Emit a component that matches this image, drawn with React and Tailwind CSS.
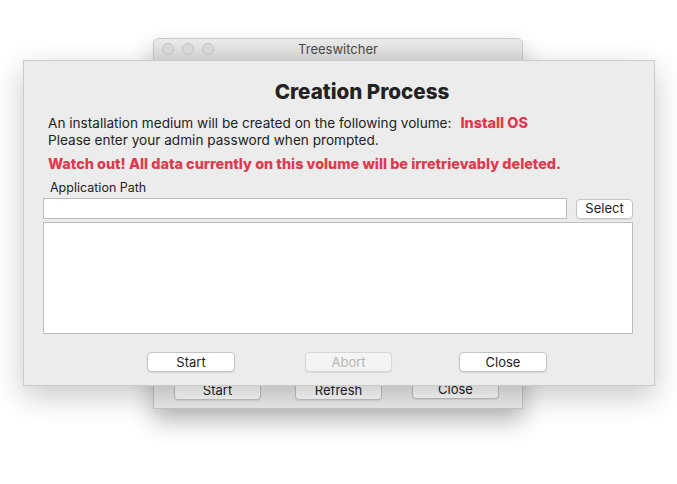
import React from "react";

const font = { fontFamily: "Inter, 'Noto Sans', sans-serif" };

const MacButton = ({ children, disabled, className = "" }) => (
  <button
    disabled={disabled}
    className={`h-[20px] rounded-[4px] border text-[13px] leading-none shadow-[0_1px_1px_rgba(0,0,0,0.08)] ${
      disabled
        ? "border-[#d6d6d6] bg-[#f4f4f4] text-[#b5b5b5]"
        : "border-[#c4c4c4] bg-white text-[#222]"
    } ${className}`}
  >
    {children}
  </button>
);

const App = () => {
  return (
    <div className="relative w-[677px] h-[484px] bg-white overflow-hidden" style={font}>
      {/* Background window */}
      <div className="absolute left-[153px] top-[38px] w-[370px] h-[371px] flex flex-col rounded-t-[6px] bg-[#ececec] border border-[#c8c8c8] shadow-[0_12px_24px_rgba(0,0,0,0.28)]">
        <div className="relative h-[22px] flex items-center justify-center rounded-t-[6px] bg-gradient-to-b from-[#ebebeb] to-[#d9d9d9] border-b border-[#b8b8b8]">
          <div className="absolute left-[8px] top-[4px] flex gap-[8px]">
            <span className="w-[12px] h-[12px] rounded-full border border-[#c4c4c4] bg-[#dcdcdc]" />
            <span className="w-[12px] h-[12px] rounded-full border border-[#c4c4c4] bg-[#dcdcdc]" />
            <span className="w-[12px] h-[12px] rounded-full border border-[#c4c4c4] bg-[#dcdcdc]" />
          </div>
          <span className="text-[13px] text-[#4a4a4a]">Treeswitcher</span>
        </div>
        <div className="flex-1" />
        <div className="flex items-start pl-[20px] pb-[6px] h-[30px]">
          <MacButton className="w-[87px] mt-[2px]">Start</MacButton>
          <MacButton className="w-[87px] ml-[34px] mt-[2px]">Refresh</MacButton>
          <MacButton className="w-[87px] ml-[30px] mt-[1px]">Close</MacButton>
        </div>
      </div>

      {/* Sheet */}
      <div className="absolute left-[23px] top-[60px] w-[632px] h-[326px] flex flex-col bg-[#ececec] border border-[#cbcbcb] shadow-[0_10px_28px_rgba(0,0,0,0.22)] pl-[19px] pr-[21px]">
        <h1 className="mt-[19px] text-center text-[20.6px] font-extrabold leading-[24px] text-[#222] pl-[48px]">
          Creation Process
        </h1>
        <div className="mt-[10px] pl-[5px] text-[13.6px] leading-[17px] text-[#222]">
          <p>
            An installation medium will be created on the following volume:
            <span className="ml-[9px] text-[14.4px] font-extrabold text-[#e0394f]">Install OS</span>
          </p>
          <p>Please enter your admin password when prompted.</p>
        </div>
        <p className="mt-[6px] pl-[5px] text-[14.4px] leading-[17px] font-extrabold text-[#e0394f]">
          Watch out! All data currently on this volume will be irretrievably deleted.
        </p>
        <label className="mt-[8px] pl-[7px] text-[12.5px] leading-[15px] text-[#222]">
          Application Path
        </label>
        <div className="mt-[3px] flex items-center gap-[9px]">
          <input className="flex-1 h-[21px] bg-white border border-[#bdbdbd] outline-none" />
          <MacButton className="w-[57px]">Select</MacButton>
        </div>
        <textarea className="mt-[3px] h-[112px] bg-white border border-[#bdbdbd] resize-none outline-none" />
        <div className="mt-[18px] flex pl-[104px]">
          <MacButton className="w-[88px]">Start</MacButton>
          <MacButton disabled className="w-[87px] ml-[70px]">Abort</MacButton>
          <MacButton className="w-[88px] ml-[67px]">Close</MacButton>
        </div>
      </div>
    </div>
  );
};

export default App;
